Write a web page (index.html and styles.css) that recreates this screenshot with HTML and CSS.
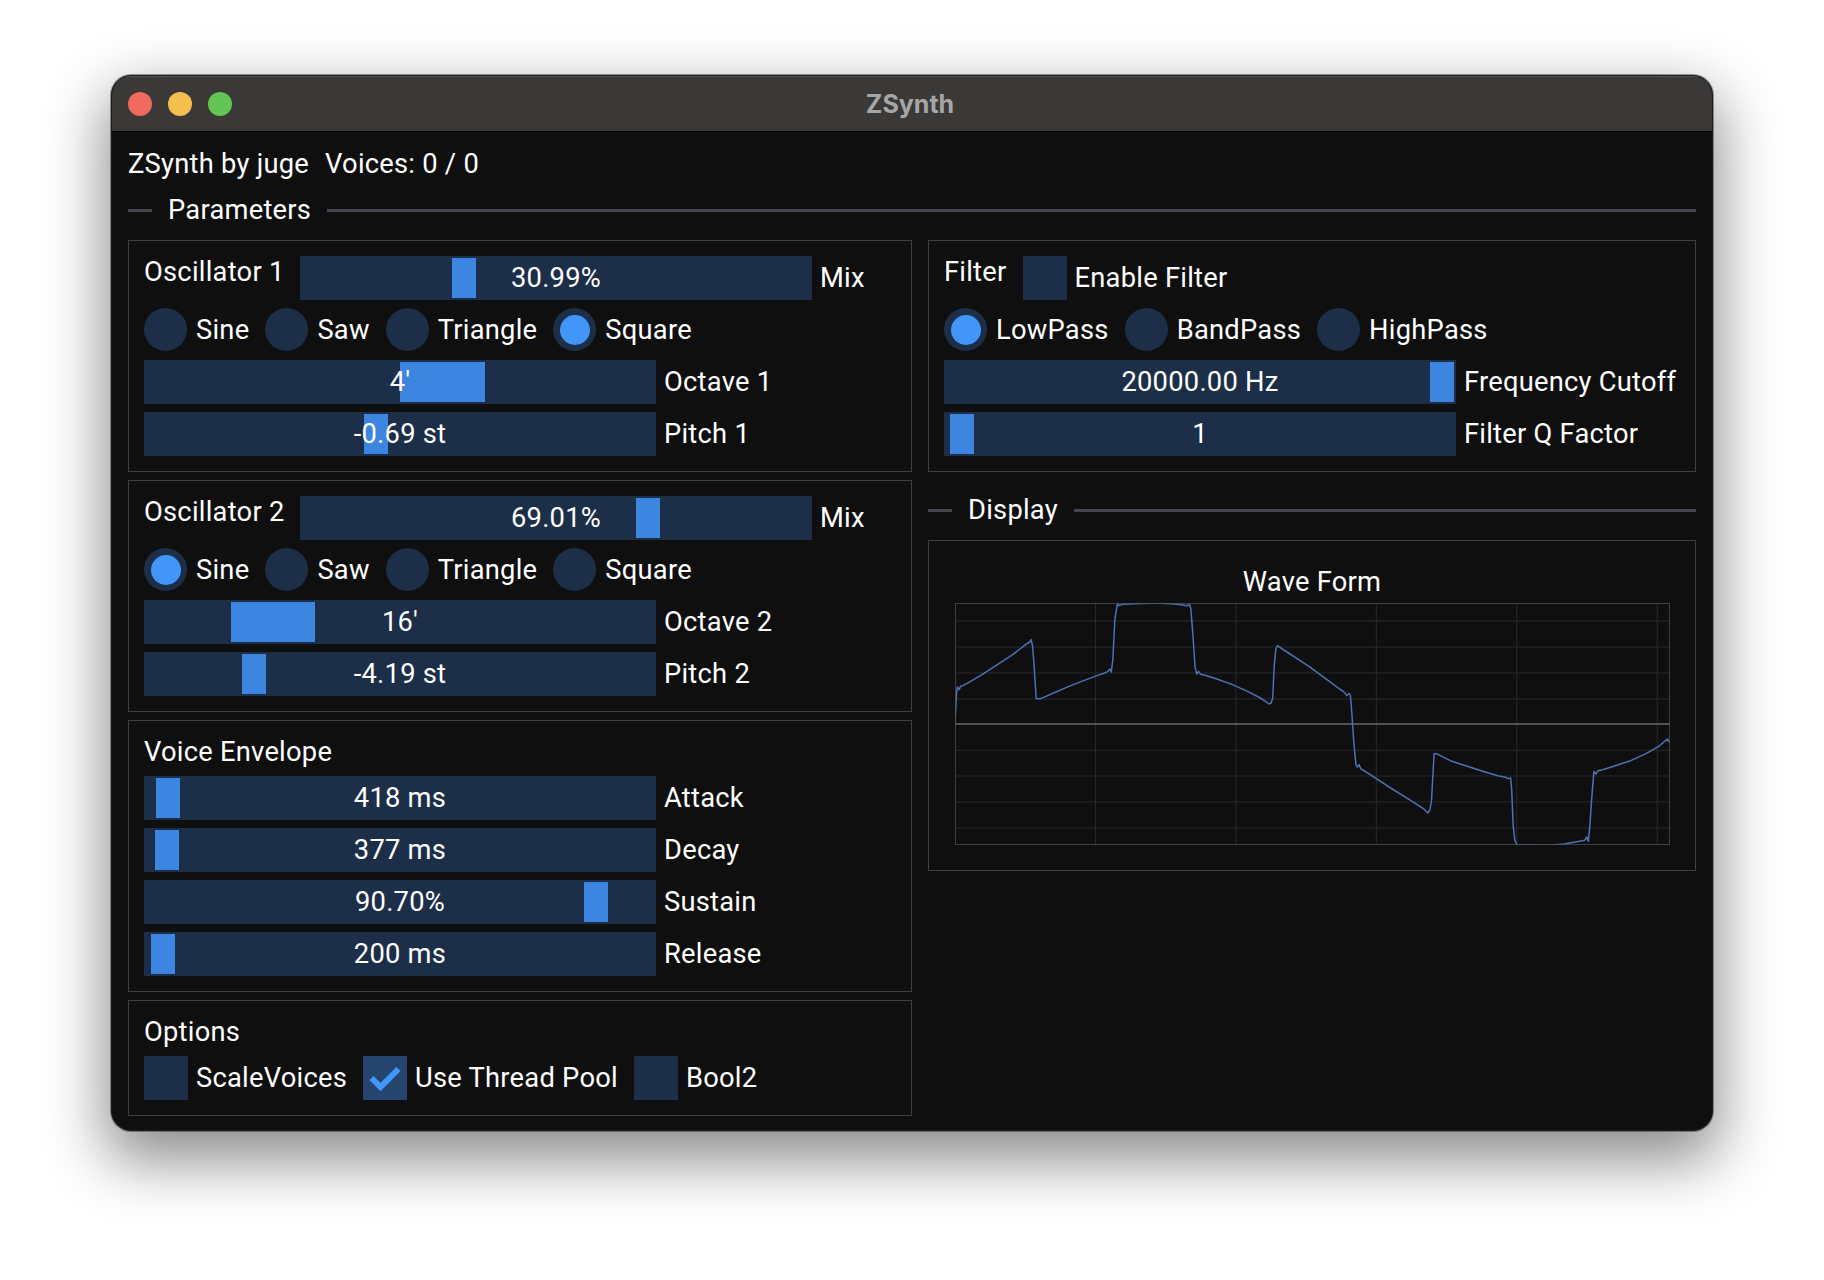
FILE: index.html
```html
<!DOCTYPE html>
<html>
<head>
<meta charset="utf-8">
<link rel="stylesheet" href="styles.css">
</head>
<body>
<div class="window">
  <div class="titlebar">
    <div class="lights">
      <span class="light red"></span>
      <span class="light yellow"></span>
      <span class="light green"></span>
    </div>
    <div class="wtitle">ZSynth</div>
    <div></div>
  </div>
  <div class="content">
    <div class="hdr"><span>ZSynth by juge</span><span>Voices: 0 / 0</span></div>
    <div class="septext"><span class="sl"></span><span class="st">Parameters</span><span class="sr"></span></div>
    <div class="columns">
      <div class="col">
        <div class="panel">
          <div class="row">
            <span class="title fixed">Oscillator 1</span>
            <div class="slider"><span class="grab" style="left:152px;width:24px"></span><span class="val">30.99%</span></div>
            <span class="lbl">Mix</span>
          </div>
          <div class="row">
            <span class="radio"><span class="dot"></span></span><span class="lbl">Sine</span>
            <span class="radio"><span class="dot"></span></span><span class="lbl">Saw</span>
            <span class="radio"><span class="dot"></span></span><span class="lbl">Triangle</span>
            <span class="radio on"><span class="dot"></span></span><span class="lbl">Square</span>
          </div>
          <div class="row">
            <div class="slider"><span class="grab" style="left:256px;width:85px"></span><span class="val">4'</span></div>
            <span class="lbl">Octave 1</span>
          </div>
          <div class="row">
            <div class="slider"><span class="grab" style="left:220px;width:24px"></span><span class="val">-0.69 st</span></div>
            <span class="lbl">Pitch 1</span>
          </div>
        </div>
        <div class="panel">
          <div class="row">
            <span class="title fixed">Oscillator 2</span>
            <div class="slider"><span class="grab" style="left:336px;width:24px"></span><span class="val">69.01%</span></div>
            <span class="lbl">Mix</span>
          </div>
          <div class="row">
            <span class="radio on"><span class="dot"></span></span><span class="lbl">Sine</span>
            <span class="radio"><span class="dot"></span></span><span class="lbl">Saw</span>
            <span class="radio"><span class="dot"></span></span><span class="lbl">Triangle</span>
            <span class="radio"><span class="dot"></span></span><span class="lbl">Square</span>
          </div>
          <div class="row">
            <div class="slider"><span class="grab" style="left:87px;width:84px"></span><span class="val">16'</span></div>
            <span class="lbl">Octave 2</span>
          </div>
          <div class="row">
            <div class="slider"><span class="grab" style="left:98px;width:24px"></span><span class="val">-4.19 st</span></div>
            <span class="lbl">Pitch 2</span>
          </div>
        </div>
        <div class="panel">
          <div class="title">Voice Envelope</div>
          <div class="row">
            <div class="slider"><span class="grab" style="left:12px;width:24px"></span><span class="val">418 ms</span></div>
            <span class="lbl">Attack</span>
          </div>
          <div class="row">
            <div class="slider"><span class="grab" style="left:11px;width:24px"></span><span class="val">377 ms</span></div>
            <span class="lbl">Decay</span>
          </div>
          <div class="row">
            <div class="slider"><span class="grab" style="left:440px;width:24px"></span><span class="val">90.70%</span></div>
            <span class="lbl">Sustain</span>
          </div>
          <div class="row">
            <div class="slider"><span class="grab" style="left:7px;width:24px"></span><span class="val">200 ms</span></div>
            <span class="lbl">Release</span>
          </div>
        </div>
        <div class="panel">
          <div class="title">Options</div>
          <div class="row">
            <span class="check"></span><span class="lbl">ScaleVoices</span>
            <span class="check hover"><svg width="44" height="44" viewBox="0 0 44 44"><polyline points="8.5,22 17.5,31 35.5,13" fill="none" stroke="#4296fa" stroke-width="6"/></svg></span><span class="lbl">Use Thread Pool</span>
            <span class="check"></span><span class="lbl">Bool2</span>
          </div>
        </div>
      </div>
      <div class="col">
        <div class="panel">
          <div class="row">
            <span class="title">Filter</span>
            <span class="check"></span><span class="lbl">Enable Filter</span>
          </div>
          <div class="row">
            <span class="radio on"><span class="dot"></span></span><span class="lbl">LowPass</span>
            <span class="radio"><span class="dot"></span></span><span class="lbl">BandPass</span>
            <span class="radio"><span class="dot"></span></span><span class="lbl">HighPass</span>
          </div>
          <div class="row">
            <div class="slider"><span class="grab" style="left:486px;width:24px"></span><span class="val">20000.00 Hz</span></div>
            <span class="lbl">Frequency Cutoff</span>
          </div>
          <div class="row">
            <div class="slider"><span class="grab" style="left:6px;width:24px"></span><span class="val">1</span></div>
            <span class="lbl">Filter Q Factor</span>
          </div>
        </div>
        <div class="septext sep2"><span class="sl"></span><span class="st">Display</span><span class="sr"></span></div>
        <div class="panel">
          <div class="plot">
            <div class="ptitle">Wave Form</div>
            <svg class="pframe" width="715" height="242" viewBox="67 370 1400 726" preserveAspectRatio="none">
              <g stroke="#29292c" stroke-width="1">
                <line x1="342" y1="370" x2="342" y2="1096" vector-effect="non-scaling-stroke"/>
                <line x1="617" y1="370" x2="617" y2="1096" vector-effect="non-scaling-stroke"/>
                <line x1="892" y1="370" x2="892" y2="1096" vector-effect="non-scaling-stroke"/>
                <line x1="1167" y1="370" x2="1167" y2="1096" vector-effect="non-scaling-stroke"/>
                <line x1="1442" y1="370" x2="1442" y2="1096" vector-effect="non-scaling-stroke"/>
                <line x1="67" y1="424" x2="1467" y2="424" vector-effect="non-scaling-stroke"/>
                <line x1="67" y1="502" x2="1467" y2="502" vector-effect="non-scaling-stroke"/>
                <line x1="67" y1="580" x2="1467" y2="580" vector-effect="non-scaling-stroke"/>
                <line x1="67" y1="658" x2="1467" y2="658" vector-effect="non-scaling-stroke"/>
                <line x1="67" y1="812" x2="1467" y2="812" vector-effect="non-scaling-stroke"/>
                <line x1="67" y1="889" x2="1467" y2="889" vector-effect="non-scaling-stroke"/>
                <line x1="67" y1="967" x2="1467" y2="967" vector-effect="non-scaling-stroke"/>
                <line x1="67" y1="1045" x2="1467" y2="1045" vector-effect="non-scaling-stroke"/>
              </g>
              <line x1="67" y1="733" x2="1467" y2="733" stroke="#6a6a6e" stroke-width="1.5" vector-effect="non-scaling-stroke"/>
              <polyline fill="none" stroke="#4c72b0" stroke-width="1.5" stroke-linejoin="round" vector-effect="non-scaling-stroke" points="67,730 70,640 72,622 75,630 78,620 82,618 90,612 120,585 150,555 180,525 205,495 213,487 216,480 219,500 222,560 226,657 235,657 245,650 260,640 290,620 320,602 345,588 360,580 366,576 370,568 373,577 376,540 380,420 385,372 388,378 395,374 420,372 460,370 490,372 510,375 520,378 524,376 527,375 529,390 533,470 537,560 540,583 544,575 548,584 555,586 580,598 610,615 640,635 665,655 675,665 682,673 686,670 689,655 692,560 695,510 698,498 720,520 760,560 800,605 820,628 828,636 834,648 838,642 841,645 844,700 848,790 852,855 855,862 858,855 862,868 880,885 920,925 960,963 985,988 993,1000 997,990 1000,962 1003,880 1005,822 1010,822 1020,830 1040,845 1070,860 1100,875 1130,888 1145,893 1150,897 1155,895 1157,930 1160,1040 1163,1080 1167,1095 1190,1096 1230,1097 1260,1093 1290,1085 1300,1082 1304,1072 1307,1085 1310,1040 1314,950 1318,875 1322,883 1326,873 1335,870 1360,858 1390,843 1420,822 1445,800 1462,778 1467,790"/>
              <rect x="67" y="370" width="1400" height="726" fill="none" stroke="#505056" stroke-width="1.5" vector-effect="non-scaling-stroke"/>
            </svg>
          </div>
        </div>
      </div>
    </div>
  </div>
</div>
</body>
</html>
```

FILE: styles.css
```css
* { box-sizing: border-box; }
html, body { margin: 0; padding: 0; }
body {
  background: #ffffff;
  font-family: Roboto, "Liberation Sans", sans-serif;
  padding: 75px 0 120px 111px;
}
.window {
  width: 1602px;
  border: 1px solid #1c1c1c;
  border-radius: 20px;
  overflow: hidden;
  background: #0f0f0f;
  box-shadow: 0 24px 60px 6px rgba(0,0,0,0.45), 0 0 0 1px rgba(0,0,0,0.35);
}
.titlebar {
  height: 56px;
  background: #3a3938;
  border-bottom: 1px solid #050505;
  display: grid;
  grid-template-columns: 1fr auto 1fr;
  align-items: center;
  box-shadow: inset 0 1px 0 rgba(255,255,255,0.12);
}
.lights { display: flex; gap: 16px; padding-left: 16px; }
.light { width: 24px; height: 24px; border-radius: 50%; display: block; }
.red { background: #ee6a5f; }
.yellow { background: #f5be4f; }
.green { background: #62c554; }
.wtitle {
  font-family: Inter, "Open Sans", sans-serif;
  font-weight: 700;
  font-size: 25px;
  color: #a6a6a6;
  padding-right: 4px;
}
.content {
  padding: 16px 16px 14px 16px;
  color: #ffffff;
  font-size: 27.3px;
  letter-spacing: 0.25px;
}
.hdr {
  display: flex;
  gap: 16px;
  height: 32px;
  line-height: 32px;
}
.septext {
  display: flex;
  align-items: center;
  height: 44px;
  margin-top: 8px;
}
.sl { width: 24px; height: 3px; background: #46454f; }
.st { margin: 0 16px; line-height: 32px; }
.sr { flex: 1; height: 3px; background: #46454f; }
.sep2 { margin-top: 8px; }
.columns {
  display: grid;
  grid-template-columns: 784px 768px;
  column-gap: 16px;
  margin-top: 8px;
  align-items: start;
}
.col { display: flex; flex-direction: column; gap: 8px; }
.panel {
  border: 1px solid #3f3f48;
  padding: 15px;
  display: flex;
  flex-direction: column;
  gap: 8px;
}
.row { display: flex; align-items: flex-start; }
.title { line-height: 32px; height: 32px; white-space: nowrap; margin-right: 16px; }
.panel > .title { margin-right: 0; }
.title.fixed { width: 140px; }
.slider {
  position: relative;
  width: 512px;
  height: 44px;
  background: #1d2e49;
  flex: none;
}
.grab {
  position: absolute;
  top: 2px;
  bottom: 2px;
  background: #3d85e0;
}
.val {
  position: relative;
  display: block;
  text-align: center;
  line-height: 45px;
  white-space: nowrap;
}
.lbl {
  line-height: 45px;
  height: 44px;
  margin-left: 8px;
  margin-right: 16px;
  white-space: nowrap;
}
.radio {
  flex: none;
  display: flex;
  align-items: center;
  justify-content: center;
  border-radius: 50%;
  background: #1d2e49;
  width: 43px;
  height: 43px;
  margin: 0 1px 1px 0;
}
.dot { width: 30px; height: 30px; border-radius: 50%; display: none; }
.radio.on .dot { display: block; background: #4296fa; }
.check {
  width: 44px;
  height: 44px;
  flex: none;
  background: #1d2e49;
  display: block;
}
.check svg { display: block; }
.check.hover { background: #24466e; }
.plot {
  padding: 10px;
  display: flex;
  flex-direction: column;
  align-items: center;
}
.ptitle { line-height: 32px; height: 32px; margin-bottom: 5px; }
.pframe { display: block; }
```
